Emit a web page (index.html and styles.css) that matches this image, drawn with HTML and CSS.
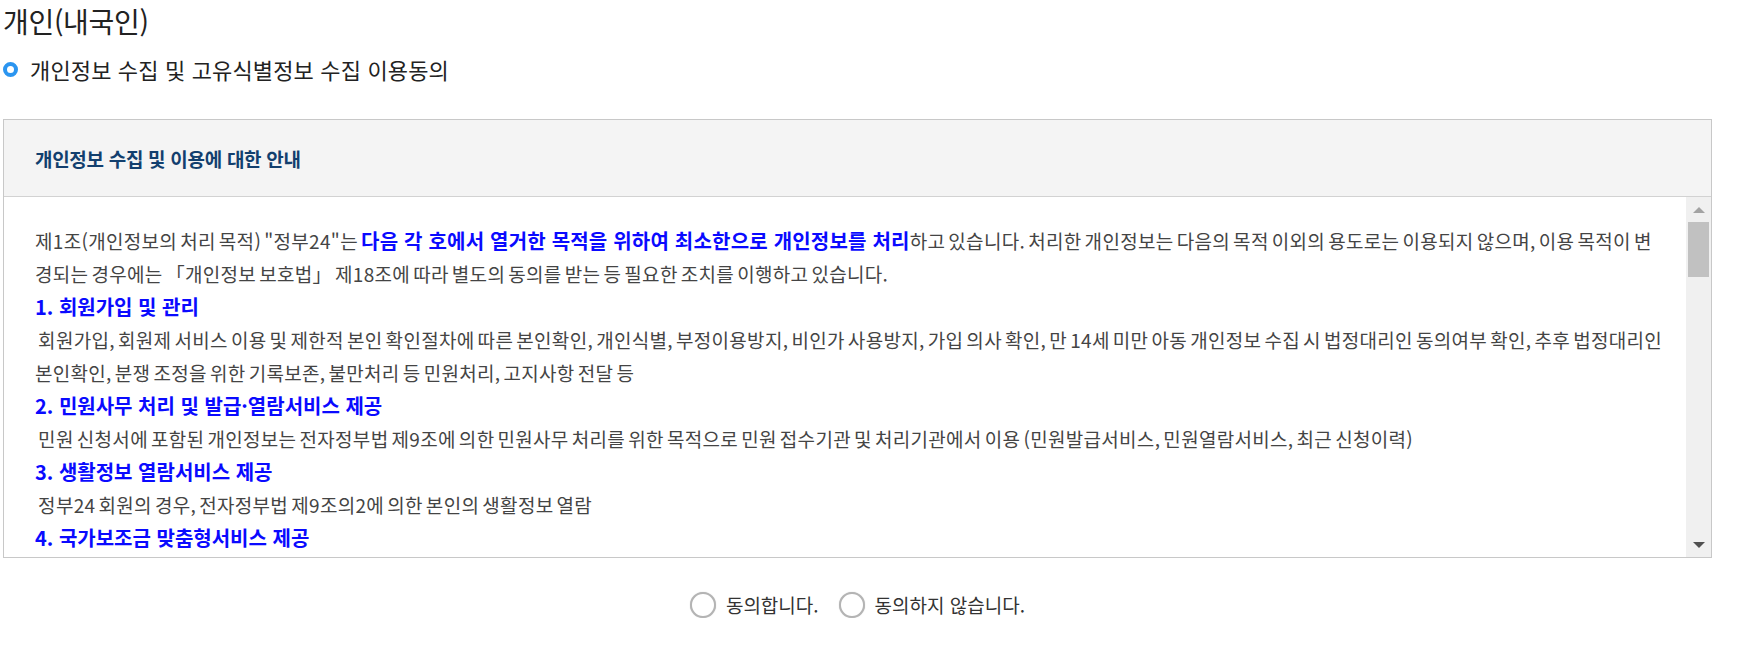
FILE: index.html
```html
<!DOCTYPE html>
<html lang="ko">
<head>
    <meta charset="UTF-8">
    <meta name="viewport" content="width=device-width, initial-scale=1.0">
    <title>정부24 - 개인정보 수집 이용동의</title>
    <link rel="stylesheet" href="styles.css">
</head>
<body>
    <div class="page">
        <h2 class="page-title">개인(내국인)</h2>
        <h3 class="sub-title"><span class="dot"></span>개인정보 수집 및 고유식별정보 수집 이용동의</h3>

        <div class="agree-box">
            <div class="agree-head">개인정보 수집 및 이용에 대한 안내</div>
            <div class="agree-body">
                <div class="agree-text">
                    <p>제1조(개인정보의 처리 목적) "정부24"는 <strong class="em">다음 각 호에서 열거한 목적을 위하여 최소한으로 개인정보를 처리</strong>하고 있습니다. 처리한 개인정보는 다음의 목적 이외의 용도로는 이용되지 않으며, 이용 목적이 변경되는 경우에는 「개인정보 보호법」 제18조에 따라 별도의 동의를 받는 등 필요한 조치를 이행하고 있습니다.</p>
                    <h4>1. 회원가입 및 관리</h4>
                    <p>&nbsp;회원가입, 회원제 서비스 이용 및 제한적 본인 확인절차에 따른 본인확인, 개인식별, 부정이용방지, 비인가 사용방지, 가입 의사 확인, 만 14세 미만 아동 개인정보 수집 시 법정대리인 동의여부 확인, 추후 법정대리인 본인확인, 분쟁 조정을 위한 기록보존, 불만처리 등 민원처리, 고지사항 전달 등</p>
                    <h4>2. 민원사무 처리 및 발급·열람서비스 제공</h4>
                    <p>&nbsp;민원 신청서에 포함된 개인정보는 전자정부법 제9조에 의한 민원사무 처리를 위한 목적으로 민원 접수기관 및 처리기관에서 이용 (민원발급서비스, 민원열람서비스, 최근 신청이력)</p>
                    <h4>3. 생활정보 열람서비스 제공</h4>
                    <p>&nbsp;정부24 회원의 경우, 전자정부법 제9조의2에 의한 본인의 생활정보 열람</p>
                    <h4>4. 국가보조금 맞춤형서비스 제공</h4>
                    <p>&nbsp;정부24 회원의 경우, 본인의 소득·재산 및 가구 정보를 활용하여 수급 가능한 국가보조금 및 복지서비스를 안내</p>
                    <h4>5. 맞춤형 알림 서비스 제공</h4>
                    <p>&nbsp;생애주기별 맞춤 정보, 민원 처리 결과, 전자문서 도착 등 각종 알림 서비스 제공</p>
                </div>
                <div class="scrollbar">
                    <span class="sb-btn sb-up"></span>
                    <span class="sb-thumb"></span>
                    <span class="sb-track"></span>
                    <span class="sb-btn sb-down"></span>
                </div>
            </div>
        </div>

        <div class="agree-radios">
            <label class="radio"><input type="radio" name="agree1"><span>동의합니다.</span></label>
            <label class="radio"><input type="radio" name="agree1"><span>동의하지 않습니다.</span></label>
        </div>
    </div>
</body>
</html>
```

FILE: styles.css
```css
body {
    margin: 0;
    font-family: "Noto Sans CJK KR", "Noto Sans", sans-serif;
    color: #333;
    background-color: #fff;
}
.page {
    padding: 3px 36px 0 3px;
}
.page-title {
    margin: 0;
    font-size: 28px;
    font-weight: normal;
    line-height: 36px;
    color: #222;
    letter-spacing: -0.3px;
}
.sub-title {
    display: flex;
    align-items: center;
    margin: 15px 0 0;
    font-size: 22px;
    font-weight: normal;
    line-height: 30px;
    color: #222;
    letter-spacing: 0.15px;
}
.dot {
    width: 7px;
    height: 7px;
    margin: 0 12px 0 0;
    border: 4.5px solid #2b95f0;
    border-radius: 50%;
    background-color: #fff;
}
.agree-box {
    margin-top: 35px;
    border: 1px solid #c8c8c8;
}
.agree-head {
    display: flex;
    align-items: center;
    height: 76px;
    padding: 0 31px;
    background-color: #f4f4f4;
    border-bottom: 1px solid #d2d2d2;
    font-size: 19px;
    font-weight: bold;
    color: #123f6e;
    letter-spacing: -0.3px;
}
.agree-body {
    display: flex;
    height: 360px;
}
.agree-text {
    flex: 1;
    overflow: hidden;
    padding: 27px 21px 0 31px;
    font-size: 19px;
    line-height: 33px;
    color: #444;
    letter-spacing: 0.3px;
    word-spacing: -2.5px;
}
.agree-text p,
.agree-text h4 {
    margin: 0;
}
.agree-text h4 {
    font-size: 20px;
    color: #0a0aff;
    letter-spacing: 0;
    word-spacing: 0;
}
.em {
    font-size: 20px;
    color: #0a0aff;
    letter-spacing: 0.2px;
    word-spacing: 0;
}

/* static scrollbar, the list starts scrolled to the top */
.scrollbar {
    display: flex;
    flex-direction: column;
    width: 25px;
    background-color: #f0f0f0;
}
.sb-btn {
    display: flex;
    justify-content: center;
    align-items: center;
    height: 25px;
}
.sb-up::before {
    content: "";
    border-left: 6px solid transparent;
    border-right: 6px solid transparent;
    border-bottom: 6px solid #a3a3a3;
}
.sb-down::before {
    content: "";
    border-left: 6px solid transparent;
    border-right: 6px solid transparent;
    border-top: 6px solid #505050;
}
.sb-thumb {
    height: 55px;
    margin: 0 2px;
    background-color: #c1c1c1;
}
.sb-track {
    flex: 1;
}
.agree-radios {
    display: flex;
    justify-content: center;
    gap: 20px;
    margin-top: 33px;
}
.radio {
    display: flex;
    align-items: center;
    gap: 10px;
    font-size: 19px;
    color: #333;
    cursor: pointer;
}
.radio input {
    appearance: none;
    width: 26px;
    height: 26px;
    margin: 0;
    border: 2px solid #b4b4b4;
    border-radius: 50%;
    background-color: #fff;
    box-shadow: 0 0 1px rgba(0,0,0,0.25);
}
.radio input:checked {
    border: 7px solid #2b95f0;
}
```
